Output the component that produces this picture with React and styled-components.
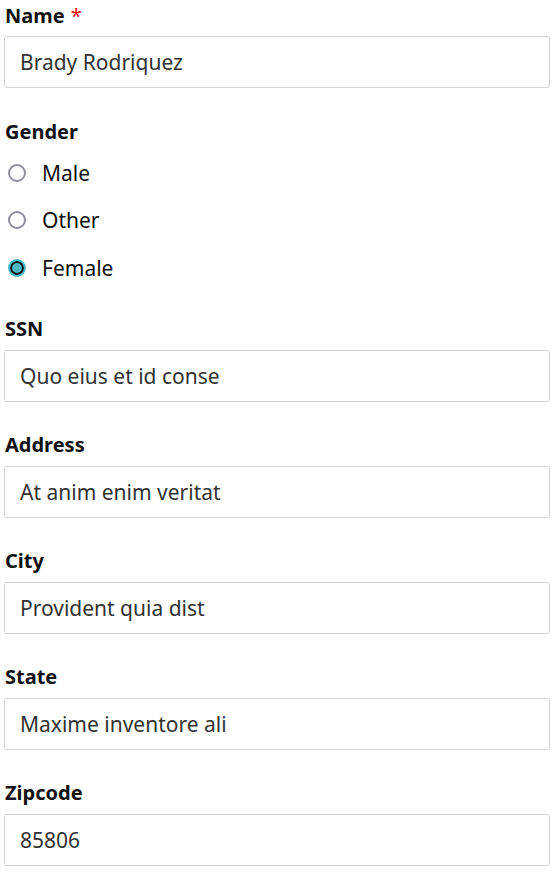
import React, { useState } from "react";
import styled, { createGlobalStyle } from "styled-components";

const GlobalStyle = createGlobalStyle`
  body {
    margin: 0;
    background: #fff;
    font-family: "Noto Sans", "Open Sans", sans-serif;
  }
`;

const Form = styled.form`
  padding: 4px 4px 0 4px;
`;

const Field = styled.div`
  margin-bottom: ${(p) => p.$gap || 31}px;
`;

const Label = styled.label`
  display: block;
  height: 24px;
  line-height: 24px;
  margin: 0 0 ${(p) => p.$below ?? 9}px 1px;
  font-size: 20px;
  font-weight: 700;
  color: #111;
`;

const Required = styled.span`
  color: #e00;
  font-weight: 400;
  margin-left: 6px;
`;

const Input = styled.input`
  box-sizing: border-box;
  display: block;
  width: 100%;
  height: 52px;
  padding: 0 15px;
  border: 1px solid #d4d4d4;
  border-radius: 3px;
  background: #fff;
  font-family: inherit;
  font-size: 21px;
  color: #333;
  outline: none;
`;

const RadioGroup = styled.div`
  display: flex;
  flex-direction: column;
`;

const RadioRow = styled.label`
  display: flex;
  align-items: center;
  height: 47.5px;
  font-size: 21px;
  color: #111;
  cursor: pointer;
`;

const Radio = styled.input.attrs({ type: "radio" })`
  appearance: none;
  box-sizing: border-box;
  width: 18px;
  height: 18px;
  margin: 0 16px 0 4px;
  border-radius: 50%;
  border: 2px solid #8f8f9d;
  background: #fff;

  &:checked {
    border-color: #4cb8c4;
    background: #4cb8c4;
    box-shadow: inset 0 0 0 2px #111;
  }
`;

const fields = [
  ["SSN", "Quo eius et id conse"],
  ["Address", "At anim enim veritat"],
  ["City", "Provident quia dist"],
  ["State", "Maxime inventore ali"],
  ["Zipcode", "85806"],
];

export default function App() {
  const [gender, setGender] = useState("female");

  return (
    <>
      <GlobalStyle />
      <Form onSubmit={(e) => e.preventDefault()}>
        <Field $gap={32}>
          <Label $below={8}>
            Name<Required>*</Required>
          </Label>
          <Input defaultValue="Brady Rodriquez" />
        </Field>

        <Field $gap={25}>
          <Label $below={5}>Gender</Label>
          <RadioGroup>
            {["Male", "Other", "Female"].map((g) => (
              <RadioRow key={g}>
                <Radio
                  name="gender"
                  checked={gender === g.toLowerCase()}
                  onChange={() => setGender(g.toLowerCase())}
                />
                {g}
              </RadioRow>
            ))}
          </RadioGroup>
        </Field>

        {fields.map(([label, value]) => (
          <Field key={label}>
            <Label>{label}</Label>
            <Input defaultValue={value} />
          </Field>
        ))}
      </Form>
    </>
  );
}
